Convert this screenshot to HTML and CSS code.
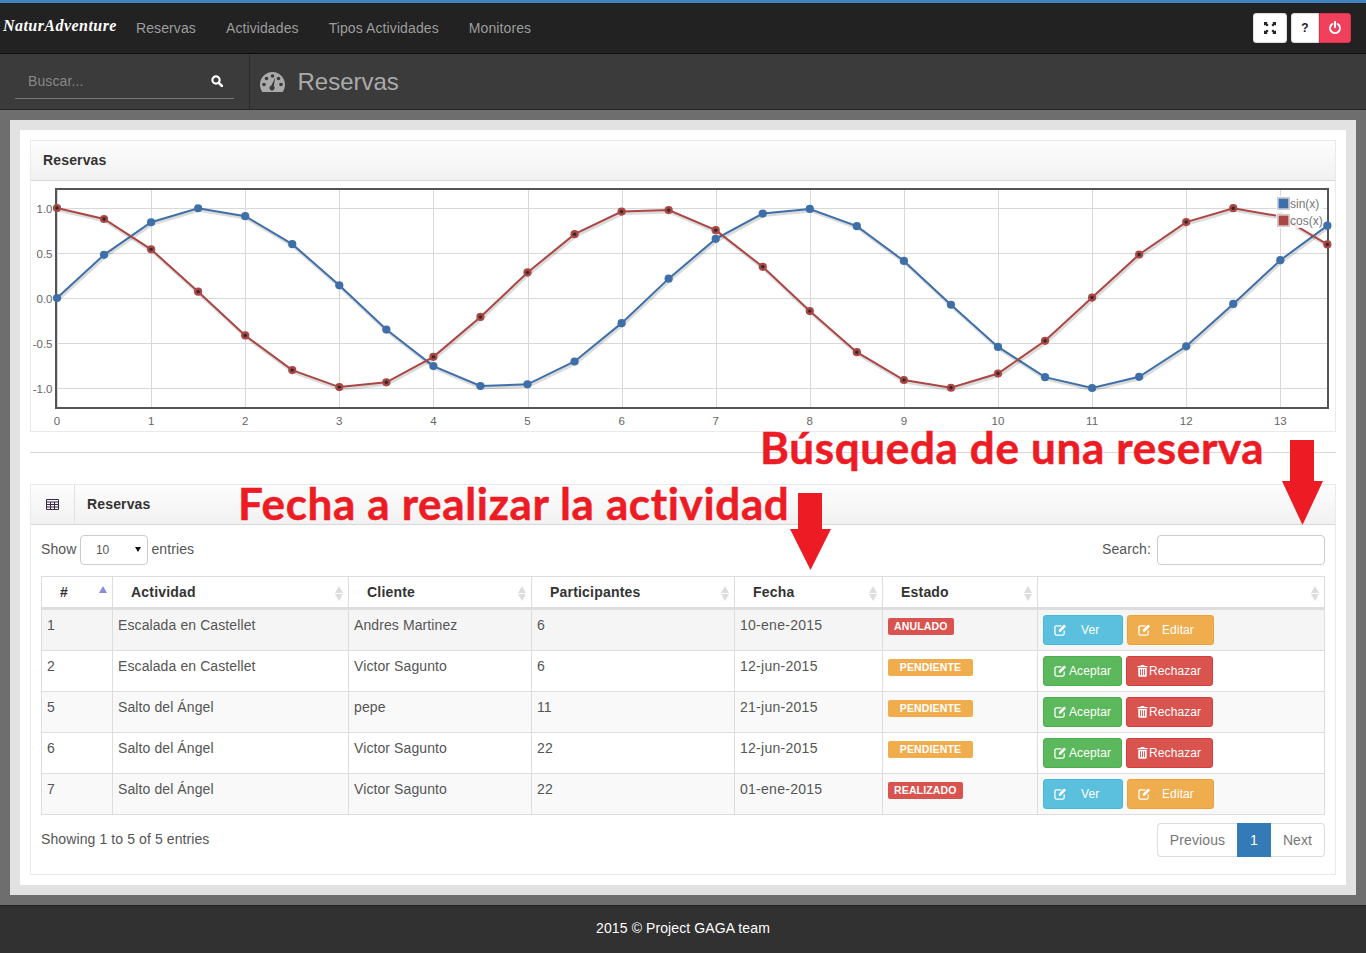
FILE: index.html
```html
<!DOCTYPE html>
<html lang="en">
	<head>
		<meta charset="UTF-8" />
		<title>NaturAdventure</title>
		<link rel="stylesheet" href="styles.css">
	</head>
	<body>
		<svg class="defs" width="0" height="0">
			<symbol id="i-edit" viewBox="0 0 14 14">
				<path d="M11 8.200v3.200a1.600 1.600 0 0 1-1.600 1.600H2.600A1.600 1.600 0 0 1 1 11.400V4.600A1.600 1.600 0 0 1 2.600 3H8" fill="none" stroke="currentColor" stroke-width="1.400"/>
				<path d="M5.200 7.200 10.900 1.500l2.100 2.100-5.700 5.700H5.200z" fill="currentColor"/>
			</symbol>
			<symbol id="i-trash" viewBox="0 0 12 14">
				<path d="M4 2V1h4v1h3.500v1.400H.5V2zM1.400 4.200h9.200V12.500a1.300 1.300 0 0 1-1.300 1.300H2.700a1.300 1.300 0 0 1-1.300-1.300zM3.300 5.500v6.800h1V5.500zM5.500 5.500v6.800h1V5.500zM7.700 5.500v6.800h1V5.500z" fill="currentColor" fill-rule="evenodd"/>
			</symbol>
		</svg>

		<nav class="topbar">
			<a class="brand">NaturAdventure</a>
			<ul class="menu">
				<li>Reservas</li>
				<li>Actividades</li>
				<li>Tipos Actividades</li>
				<li>Monitores</li>
			</ul>
			<div class="tools">
				<button class="tool tool-full">
					<svg width="12" height="12" viewBox="0 0 12 12"><path d="M0 0h3.800L2.700 1.100 4.600 3 3 4.600 1.100 2.700 0 3.800zM12 0v3.800L10.900 2.700 9 4.600 7.400 3 9.300 1.100 8.200 0zM0 12V8.200l1.100 1.100L3 7.400 4.600 9 2.700 10.900 3.800 12zM12 12H8.200l1.100-1.100L7.400 9 9 7.400l1.900 1.900L12 8.200z" fill="#222"/></svg>
				</button>
				<div class="tool-group">
					<button class="tool tool-help">?</button>
					<button class="tool tool-off">
						<svg width="12" height="13" viewBox="0 0 12 13"><path d="M3.400 2.900a5 5 0 1 0 5.200 0M6 .8v5.400" fill="none" stroke="#fff" stroke-width="1.900" stroke-linecap="round"/></svg>
					</button>
				</div>
			</div>
		</nav>

		<div class="subbar">
			<div class="search-box">
				<div class="search-line">
					<span>Buscar...</span>
					<svg width="12" height="12" viewBox="0 0 12 12"><circle cx="5" cy="5" r="3.600" fill="none" stroke="#fff" stroke-width="2.200"/><path d="M7.800 7.800 11 11" stroke="#fff" stroke-width="2.600" stroke-linecap="round"/></svg>
				</div>
			</div>
			<div class="page-title">
				<svg width="25" height="20" viewBox="0 0 25 20"><path d="M12.500 0C5.600 0 0 5.600 0 12.500c0 2.700.8 5.200 2.300 7.500h20.400c1.500-2.300 2.300-4.800 2.300-7.500C25 5.600 19.400 0 12.500 0z" fill="#aaa"/><g fill="#3b3b3b"><circle cx="12.500" cy="4" r="1.800"/><circle cx="6.500" cy="6.500" r="1.800"/><circle cx="18.500" cy="6.500" r="1.800"/><circle cx="4" cy="12.500" r="1.800"/><circle cx="21" cy="12.500" r="1.800"/><path d="M15.200 5.500 13.800 14a2.600 2.600 0 1 1-2.400-.6z"/></g></svg>
				<h1>Reservas</h1>
			</div>
		</div>

		<main class="content">
			<div class="wrap">
				<section class="panel">
					<header class="panel-head"><h2>Reservas</h2></header>
					<div id="chart"></div>
				</section>

				<hr class="split">

				<section class="panel">
					<header class="panel-head">
						<span class="head-icon">
							<svg width="13" height="11" viewBox="0 0 13 11"><path d="M.5.500h12v10H.5zM.5 3h12M.5 5.500h12M.5 8h12M4.500 3v7.500M8.500 3v7.500" fill="none" stroke="#3a2a4a"/></svg>
						</span>
						<h2>Reservas</h2>
					</header>
					<div class="panel-body">
						<div class="controls">
							<label class="length">Show
								<span class="select-wrap"><select><option>10</option></select></span>
								entries</label>
							<label class="filter">Search: <input type="text"></label>
						</div>
						<table class="grid">
							<colgroup>
								<col class="c-id"><col class="c-act"><col class="c-cli"><col class="c-par"><col class="c-date"><col class="c-state"><col class="c-btn">
							</colgroup>
							<thead>
								<tr>
									<th class="sorted">#</th>
									<th>Actividad</th>
									<th>Cliente</th>
									<th>Participantes</th>
									<th>Fecha</th>
									<th>Estado</th>
									<th></th>
								</tr>
							</thead>
							<tbody>
								<tr class="hover">
									<td>1</td><td>Escalada en Castellet</td><td>Andres Martinez</td><td>6</td><td class="date">10-ene-2015</td>
									<td><span class="tag tag-red">ANULADO</span></td>
									<td><div class="btns">
										<a class="btn btn-info btn-ver"><svg><use href="#i-edit"/></svg>Ver</a>
										<a class="btn btn-warn btn-edit"><svg><use href="#i-edit"/></svg>Editar</a>
									</div></td>
								</tr>
								<tr>
									<td>2</td><td>Escalada en Castellet</td><td>Victor Sagunto</td><td>6</td><td class="date">12-jun-2015</td>
									<td><span class="tag tag-wide tag-orange">PENDIENTE</span></td>
									<td><div class="btns">
										<a class="btn btn-ok"><svg><use href="#i-edit"/></svg>Aceptar</a>
										<a class="btn btn-no"><svg class="trash"><use href="#i-trash"/></svg>Rechazar</a>
									</div></td>
								</tr>
								<tr class="odd">
									<td>5</td><td>Salto del Ángel</td><td>pepe</td><td>11</td><td class="date">21-jun-2015</td>
									<td><span class="tag tag-wide tag-orange">PENDIENTE</span></td>
									<td><div class="btns">
										<a class="btn btn-ok"><svg><use href="#i-edit"/></svg>Aceptar</a>
										<a class="btn btn-no"><svg class="trash"><use href="#i-trash"/></svg>Rechazar</a>
									</div></td>
								</tr>
								<tr>
									<td>6</td><td>Salto del Ángel</td><td>Victor Sagunto</td><td>22</td><td class="date">12-jun-2015</td>
									<td><span class="tag tag-wide tag-orange">PENDIENTE</span></td>
									<td><div class="btns">
										<a class="btn btn-ok"><svg><use href="#i-edit"/></svg>Aceptar</a>
										<a class="btn btn-no"><svg class="trash"><use href="#i-trash"/></svg>Rechazar</a>
									</div></td>
								</tr>
								<tr class="odd">
									<td>7</td><td>Salto del Ángel</td><td>Victor Sagunto</td><td>22</td><td class="date">01-ene-2015</td>
									<td><span class="tag tag-red">REALIZADO</span></td>
									<td><div class="btns">
										<a class="btn btn-info btn-ver"><svg><use href="#i-edit"/></svg>Ver</a>
										<a class="btn btn-warn btn-edit"><svg><use href="#i-edit"/></svg>Editar</a>
									</div></td>
								</tr>
							</tbody>
						</table>
						<div class="table-foot">
							<div class="info">Showing 1 to 5 of 5 entries</div>
							<div class="pager">
								<a class="page-prev">Previous</a>
								<a class="page-cur">1</a>
								<a class="page-next">Next</a>
							</div>
						</div>
					</div>
				</section>
			</div>
		</main>

		<footer class="foot">2015 © Project GAGA team</footer>

		<!-- anotaciones sobre la captura -->
		<div class="note note-search">Búsqueda de una reserva</div>
		<div class="note note-date">Fecha a realizar la actividad</div>
		<svg class="arrow arrow-search" width="41" height="85" viewBox="0 0 41 85"><path d="M8 0h24v41h9L20.500 85 0 41h8z" fill="#ed1c24"/></svg>
		<svg class="arrow arrow-date" width="41" height="77" viewBox="0 0 41 77"><path d="M8 0h24v36h9L20.500 77 0 36h8z" fill="#ed1c24"/></svg>

		<script src="chart.js"></script>
	</body>
</html>
```
FILE: styles.css
```css
* {
	box-sizing: border-box;
}
body {
	margin: 0;
	font-family: "Liberation Sans", Arial, sans-serif;
	font-size: 14px;
	line-height: 20px;
	letter-spacing: 0.1px;
	color: #555;
	background: #313131;
	border-top: 3px solid #3f83c3;
	position: relative;
}
.defs {
	position: absolute;
}

.topbar {
	height: 51px;
	background: #222;
	border-bottom: 1px solid #0f0f0f;
	display: flex;
	align-items: center;
}
.brand {
	font-family: "Liberation Serif", serif;
	font-weight: bold;
	font-style: italic;
	font-size: 16px;
	letter-spacing: 0.45px;
	color: #fff;
	margin: -5px 0 0 3px;
	width: 118px;
}
.menu {
	list-style: none;
	display: flex;
	gap: 30px;
	margin: 0 0 0 15px;
	padding: 0;
	color: #9d9d9d;
	letter-spacing: 0.1px;
}
.tools {
	margin-left: auto;
	margin-right: 15px;
	display: flex;
	gap: 4px;
	margin-top: -1px;
}
.tool {
	height: 30px;
	border: 1px solid #ddd;
	background: #fff;
	border-radius: 3px;
	padding: 0;
	display: flex;
	align-items: center;
	justify-content: center;
}
.tool-full {
	width: 34px;
}
.tool-group {
	display: flex;
}
.tool-help {
	width: 28px;
	border-radius: 3px 0 0 3px;
	font: bold 12px "Liberation Sans", sans-serif;
	color: #222;
}
.tool-off {
	width: 32px;
	border-color: #d9344f;
	background: #f0405c;
	border-radius: 0 3px 3px 0;
}

.subbar {
	height: 56px;
	background: #3b3b3b;
	border-bottom: 1px solid #262626;
	display: flex;
}
.search-box {
	width: 250px;
	padding: 0 15px;
	border-right: 1px solid #2a2a2a;
}
.search-line {
	height: 45px;
	border-bottom: 1px solid #777;
	color: #888;
	padding: 10px 11px 0 13px;
	display: flex;
	justify-content: space-between;
	align-items: center;
}
.page-title {
	display: flex;
	align-items: center;
	padding-left: 10px;
	gap: 12.500px;
	color: #aaa;
}
.page-title h1 {
	margin: 0;
	font-size: 24px;
	font-weight: normal;
	letter-spacing: 0;
}

.content {
	height: 795px;
	padding: 10px;
	background: #6e6e6e;
}
.wrap {
	height: 775px;
	border: 10px solid #e2e2e2;
	background: #fff;
	padding: 10px;
}

.panel {
	border: 1px solid #eaeaea;
}
.panel-head {
	height: 40px;
	display: flex;
	align-items: center;
	background: linear-gradient(#fdfdfd, #f1f1f1);
	border-bottom: 1px solid #d8d8d8;
}
.panel-head h2 {
	margin: -1px 0 0 12px;
	font-size: 14px;
	color: #333;
	letter-spacing: 0.15px;
}
.head-icon {
	width: 44px;
	height: 39px;
	border-right: 1px solid #e2e2e2;
	display: flex;
	align-items: center;
	justify-content: center;
}
#chart {
	height: 250px;
}
#chart svg {
	display: block;
}
#chart text {
	font-family: "Liberation Sans", Arial, sans-serif;
	font-size: 11.500px;
	letter-spacing: 0;
	fill: #666;
}
#chart text.legend {
	font-size: 12px;
	fill: #777;
}

.split {
	border: 0;
	border-top: 1px solid #d8d8d8;
	margin: 20px 0 31px;
}

.panel-body {
	padding: 10px 10px 17px;
}
.controls {
	display: flex;
	justify-content: space-between;
	height: 30px;
	margin-bottom: 11px;
}
.length,
.filter {
	display: flex;
	align-items: flex-start;
	line-height: 28px;
	gap: 3.500px;
}
.filter {
	gap: 6px;
}
.select-wrap {
	position: relative;
	display: block;
}
.select-wrap::after {
	content: "";
	position: absolute;
	right: 7px;
	top: 12px;
	border: 3px solid transparent;
	border-top: 5px solid #111;
	border-bottom: 0;
}
select {
	appearance: none;
	width: 68px;
	height: 30px;
	border: 1px solid #ccc;
	border-radius: 4px;
	background: #fff;
	padding: 0 15px;
	font: 12px "Liberation Sans", sans-serif;
	color: #555;
	display: block;
}
.filter input {
	width: 168px;
	height: 30px;
	border: 1px solid #ccc;
	border-radius: 4px;
	background: #fff;
}

.grid {
	width: 1284px;
	table-layout: fixed;
	border-collapse: collapse;
}
.c-id { width: 71px; }
.c-act { width: 236px; }
.c-cli { width: 183px; }
.c-par { width: 203px; }
.c-date { width: 148px; }
.c-state { width: 155px; }
.c-btn { width: 287px; }
.grid th,
.grid td {
	border: 1px solid #ddd;
	text-align: left;
	vertical-align: top;
}
.grid th {
	height: 32px;
	padding: 5px 18px 0;
	border-bottom: 3px solid #ddd;
	color: #333;
	letter-spacing: 0.2px;
	position: relative;
}
.grid th::before,
.grid th::after {
	content: "";
	position: absolute;
	right: 5.500px;
	border: 4.500px solid transparent;
	border-top: 0;
	border-bottom: 7px solid #ddd;
	top: 9px;
}
.grid th::after {
	border-bottom: 0;
	border-top: 7px solid #ddd;
	top: 17px;
}
.grid th.sorted::before {
	border-bottom-color: #8a8adf;
}
.grid th.sorted::after {
	display: none;
}
.grid td {
	height: 41px;
	padding: 5px;
}
.grid td.date {
	letter-spacing: 0.27px;
}
.hover td {
	background: #f5f5f5;
}
.odd td {
	background: #f9f9f9;
}

.tag {
	display: inline-block;
	vertical-align: top;
	margin-top: 3px;
	height: 17px;
	line-height: 16px;
	padding: 0 6px;
	border-radius: 2px;
	font-size: 10.500px;
	font-weight: bold;
	color: #fff;
	letter-spacing: 0.15px;
}
.tag-wide {
	width: 85px;
	text-align: center;
}
.tag-red {
	background: #d9534f;
}
.tag-orange {
	background: #f0ad4e;
}

.btns {
	display: flex;
	gap: 4px;
}
.btn {
	height: 30px;
	border: 1px solid;
	border-radius: 3px;
	color: #fff;
	font-size: 12px;
	line-height: 28px;
	display: flex;
	align-items: center;
	padding-left: 10px;
}
.btn svg {
	width: 13px;
	height: 13px;
	margin: -2px 2px 0 0;
}
.btn svg.trash {
	width: 11px;
	margin-right: 1px;
}
.btn-ok {
	width: 79px;
	background: #5cb85c;
	border-color: #4cae4c;
}
.btn-no {
	width: 87px;
	background: #d9534f;
	border-color: #d43f3a;
}
.btn-info {
	background: #5bc0de;
	border-color: #46b8da;
}
.btn-warn {
	background: #f0ad4e;
	border-color: #eea236;
}
.btn-ver {
	width: 80px;
}
.btn-edit {
	width: 87px;
}
.btn-ver svg {
	margin-right: 14px;
}
.btn-edit svg {
	margin-right: 11px;
}

.table-foot {
	display: flex;
	justify-content: space-between;
	margin-top: 8px;
}
.info {
	margin-top: 6px;
}
.pager {
	display: flex;
	height: 34px;
	line-height: 32px;
	color: #777;
	text-align: center;
}
.pager a {
	border: 1px solid #ddd;
}
.pager .page-prev {
	width: 80px;
	border-radius: 4px 0 0 4px;
	border-right: 0;
}
.pager .page-cur {
	background: #337ab7;
	border-color: #337ab7;
	color: #fff;
	width: 34px;
}
.pager .page-next {
	width: 54px;
	border-radius: 0 4px 4px 0;
	border-left: 0;
}

.foot {
	height: 48px;
	border-top: 1px solid #222;
	color: #fff;
	text-align: center;
	line-height: 44px;
}

/* anotaciones */
.note {
	position: absolute;
	font-family: Lato, sans-serif;
	font-weight: bold;
	font-size: 44px;
	line-height: 34px;
	letter-spacing: 0.65px;
	-webkit-text-stroke: 0.5px #ed1c24;
	color: #ed1c24;
	white-space: nowrap;
}
.note-search {
	left: 760px;
	top: 427px;
}
.note-date {
	left: 238px;
	top: 483px;
}
.arrow {
	position: absolute;
}
.arrow-search {
	left: 1282px;
	top: 437px;
}
.arrow-date {
	left: 790px;
	top: 490px;
}
```
FILE: chart.js
```js
// dibuja la grafica de senos y cosenos
const NS = "http://www.w3.org/2000/svg";
const chart = document.querySelector("#chart");
const svg = document.createElementNS(NS, "svg");

svg.setAttribute("width", 1304);
svg.setAttribute("height", 250);
svg.setAttribute("viewBox", "31 181 1304 250");
chart.appendChild(svg);

function add(name, attrs, text) {
	const el = document.createElementNS(NS, name);
	for (const key in attrs) el.setAttribute(key, attrs[key]);
	if (text) el.textContent = text;
	svg.appendChild(el);
	return el;
}

const px = (x) => 57 + x * 94.1;
const py = (y) => 298 - y * 90;

for (let x = 0; x <= 13; x++) {
	const gx = Math.round(px(x)) + 0.5;
	add("line", { x1: gx, x2: gx, y1: 189, y2: 407, stroke: "#d8d8d8" });
	add("text", { x: px(x), y: 425, "text-anchor": "middle" }, String(x));
}
[1, 0.5, 0, -0.5, -1].forEach((y) => {
	add("line", { x1: 56, x2: 1328, y1: py(y) + 0.5, y2: py(y) + 0.5, stroke: "#d8d8d8" });
	add("text", { x: 52.5, y: py(y) + 5, "text-anchor": "end" }, y.toFixed(1));
});

add("rect", { x: 56, y: 189, width: 1272, height: 219, fill: "none", stroke: "#545454", "stroke-width": 2 });

function serie(fn, color, dot) {
	const pts = [];
	for (let i = 0; i <= 27; i++) pts.push([px(i / 2), py(fn(i / 2))]);
	const line = pts.map((p) => p.join(",")).join(" ");
	add("polyline", { points: line, fill: "none", stroke: "rgba(0,0,0,0.14)", "stroke-width": 3, transform: "translate(1 2)" });
	add("polyline", { points: line, fill: "none", stroke: color, "stroke-width": 2 });
	pts.forEach((p) => {
		add("circle", { cx: p[0], cy: p[1], r: 4.1, fill: color });
		if (dot) add("circle", { cx: p[0], cy: p[1], r: 1.7, fill: dot });
	});
}

serie(Math.sin, "#3f6fa8");
serie(Math.cos, "#aa4643", "#2b2b2b");

// leyenda
add("rect", { x: 1276, y: 196, width: 47, height: 32, fill: "#fff", opacity: 0.85 });
[["sin(x)", "#3f6fa8", 197], ["cos(x)", "#aa4643", 214]].forEach((item) => {
	add("rect", { x: 1277.5, y: item[2] + 0.5, width: 12, height: 12, fill: "#fff", stroke: "#ccc" });
	add("rect", { x: 1278.5, y: item[2] + 1.5, width: 10, height: 10, fill: item[1] });
	add("text", { x: 1290, y: item[2] + 11, class: "legend" }, item[0]);
});
```
